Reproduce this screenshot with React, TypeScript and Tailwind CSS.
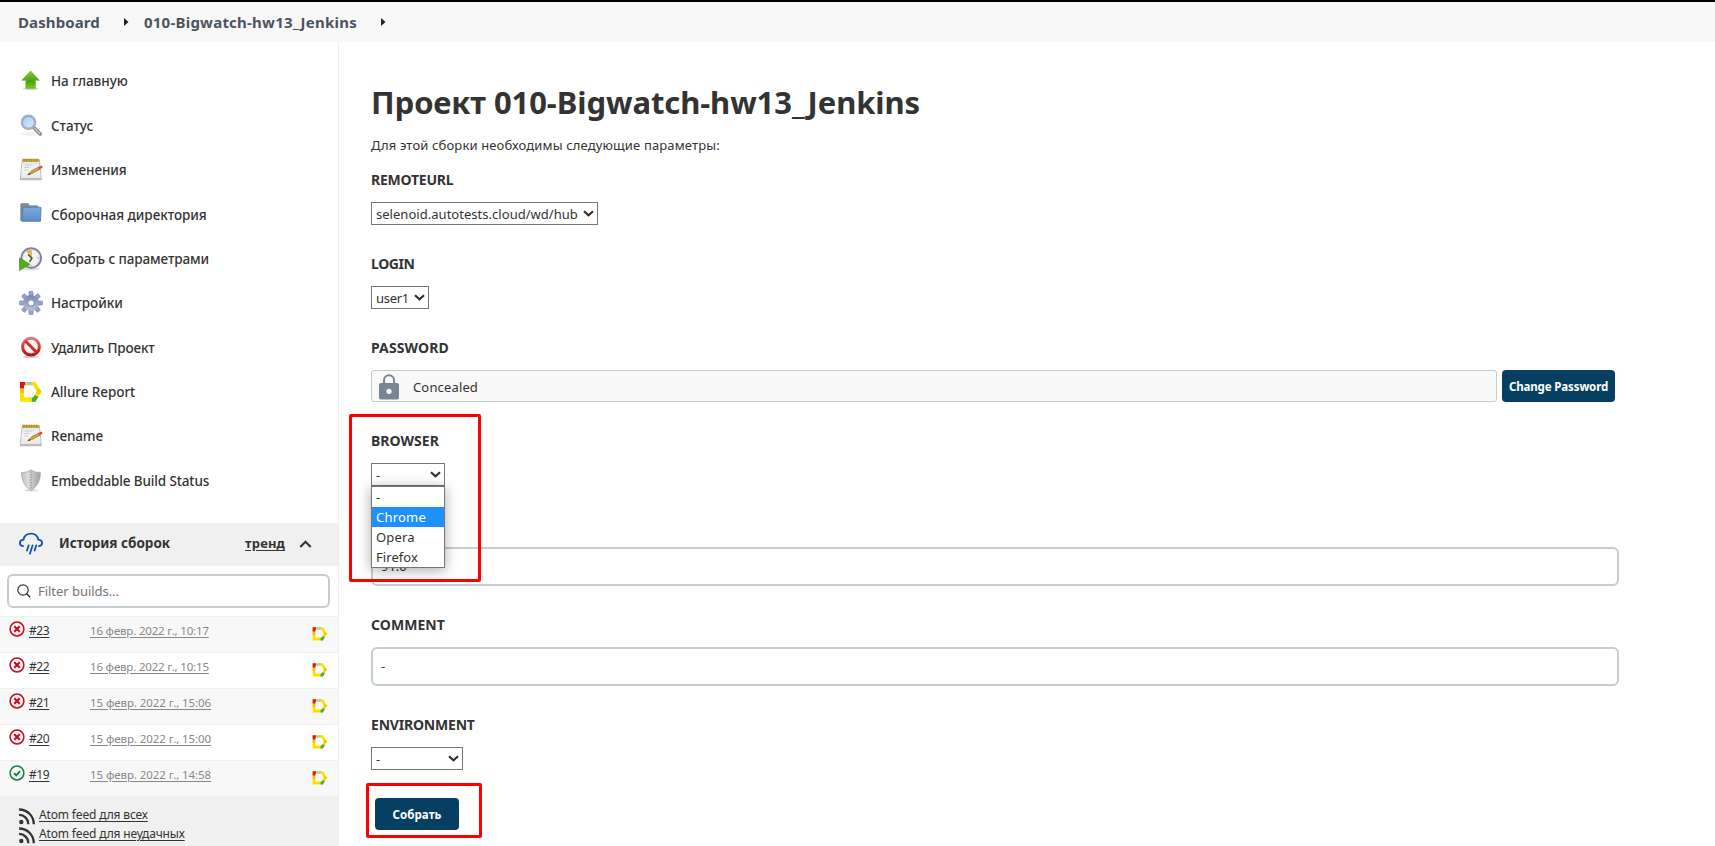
import type { ReactNode } from "react";

function UpIcon() {
  return (
    <svg width="24" height="24" viewBox="0 0 24 24">
      <defs>
        <linearGradient id="up" x1="0" y1="0" x2="0" y2="1">
          <stop offset="0" stopColor="#8cc63f" />
          <stop offset="0.6" stopColor="#4e9f12" />
          <stop offset="1" stopColor="#6fd40c" />
        </linearGradient>
      </defs>
      <ellipse cx="11.8" cy="19.8" rx="8" ry="1.5" fill="#d8d8d8" />
      <path d="M11.600 2 20.300 11.300h-4v8H6.900v-8H2.900z" fill="url(#up)" stroke="#6fae35" strokeWidth="0.7" strokeLinejoin="round" />
    </svg>
  );
}

function SearchIcon() {
  return (
    <svg width="24" height="24" viewBox="0 0 24 24">
      <defs>
        <linearGradient id="lens" x1="0" y1="0" x2="1" y2="1">
          <stop offset="0" stopColor="#a3c6ef" />
          <stop offset="1" stopColor="#e6f1fc" />
        </linearGradient>
      </defs>
      <ellipse cx="12" cy="20" rx="10" ry="1.800" fill="#efefef" />
      <path d="m15.200 14 6 6" stroke="#8b8b8b" strokeWidth="3.600" strokeLinecap="round" />
      <path d="m16 14.600 4.600 4.900" stroke="#c6c6c6" strokeWidth="1.500" strokeLinecap="round" />
      <circle cx="9.500" cy="8.300" r="7" fill="url(#lens)" stroke="#a9adb5" strokeWidth="1.600" />
      <circle cx="9.500" cy="8.300" r="5.800" fill="none" stroke="#7aa3df" strokeWidth="0.9" />
    </svg>
  );
}

function NotepadIcon() {
  return (
    <svg width="24" height="24" viewBox="0 0 24 24">
      <defs>
        <linearGradient id="pad" x1="0" y1="0" x2="0" y2="1">
          <stop offset="0" stopColor="#e2e2e0" />
          <stop offset="0.5" stopColor="#f6f6f5" />
          <stop offset="1" stopColor="#e4e4e2" />
        </linearGradient>
      </defs>
      <path d="M3.200 2h17.200l2 19.500H1.200z" fill="url(#pad)" stroke="#b3b3b1" strokeWidth="0.800" />
      <path d="M1.400 20h20.800l.3 2.200H1z" fill="#bcbcba" />
      <rect x="3.300" y="0.800" width="17" height="3" fill="#c0a83c" />
      <path d="M5 .8v3M7.500.8v3M10 .8v3M12.500.8v3M15 .8v3M17.500.8v3" stroke="#93801f" strokeWidth="0.700" />
      <path d="M5.500 7h8M5.300 9.500h5M5.100 12h4" stroke="#cdcdcd" strokeWidth="1" />
      <path d="m9.500 16.300 3.200-3.700 7.300-3.600 1 2.200-7.300 4z" fill="#dda048" stroke="#8c6127" strokeWidth="0.600" />
      <path d="m8.300 17.200 2-2.200 1.200 1.400z" fill="#3b2b18" />
      <path d="m19.500 9 3-1.600 1.200 2.200-3 1.700z" fill="#d9443c" />
    </svg>
  );
}

function FolderIcon() {
  return (
    <svg width="24" height="24" viewBox="0 0 24 24">
      <defs>
        <linearGradient id="folder" x1="0" y1="0" x2="0" y2="1">
          <stop offset="0" stopColor="#7fa9da" />
          <stop offset="1" stopColor="#5c8cc9" />
        </linearGradient>
      </defs>
      <path d="M1.700 2.500q0-.9.900-.9h6.300q.9 0 .9.900V3.700h8q1 0 1 1V18.500h-17.100z" fill="#868a89" stroke="#757978" strokeWidth="0.600" />
      <path d="M4 5.200h17.700l.3.400L21.500 19.300H2.800z" fill="url(#folder)" stroke="#4878b5" strokeWidth="0.800" />
    </svg>
  );
}

function ClockIcon() {
  return (
    <svg width="24" height="24" viewBox="0 0 24 24">
      <ellipse cx="12" cy="22" rx="9" ry="1.300" fill="#dedede" />
      <circle cx="12.200" cy="11" r="9.800" fill="#f2f2ec" stroke="#7f7ea3" strokeWidth="1.900" />
      <circle cx="12.200" cy="11" r="8.400" fill="none" stroke="#cfcfcf" strokeWidth="0.700" />
      <path d="M12.500 9.500 7.500 4.500q2.500-2 5-1z" fill="#e6c23d" stroke="#c9a745" strokeWidth="0.500" />
      <path d="m9 7.500 4 3.700-2.500 3.600" fill="none" stroke="#444444" strokeWidth="1.400" />
      <path d="M18.500 11h1.500M12.200 17.800V19" stroke="#999" strokeWidth="0.900" />
      <path d="m.500 11 10.500 6.200L.5 23.500z" fill="#4fae1c" stroke="#32810f" strokeWidth="0.600" />
    </svg>
  );
}

const teeth = [0, 45, 90, 135, 180, 225, 270, 315];

function GearIcon() {
  return (
    <svg width="24" height="24" viewBox="0 0 24 24">
      <defs>
        <linearGradient id="gear" x1="0" y1="0" x2="0" y2="1">
          <stop offset="0" stopColor="#7584b0" />
          <stop offset="1" stopColor="#bcc2da" />
        </linearGradient>
      </defs>
      <g fill="#97a1c5" stroke="#7682ab" strokeWidth="0.600">
        {teeth.map((a) => (
          <path key={a} d="M9.700 5.500 10.200.5h3.600l.5 5z" transform={`rotate(${a} 12 12)`} />
        ))}
      </g>
      <circle cx="12" cy="12" r="7.800" fill="url(#gear)" />
      <circle cx="12" cy="12" r="3.100" fill="#fff" stroke="#8590b5" strokeWidth="0.900" />
    </svg>
  );
}

function NoEntryIcon() {
  return (
    <svg width="24" height="24" viewBox="0 0 24 24">
      <defs>
        <linearGradient id="stop" x1="0" y1="0" x2="0" y2="1">
          <stop offset="0" stopColor="#e8787a" />
          <stop offset="0.500" stopColor="#d6383b" />
          <stop offset="1" stopColor="#c50d12" />
        </linearGradient>
      </defs>
      <ellipse cx="12" cy="20.800" rx="8" ry="1.200" fill="#cfcfcf" />
      <circle cx="12" cy="10.700" r="8.400" fill="#f8f5f5" stroke="url(#stop)" strokeWidth="3" />
      <path d="m6.300 5 11.400 11.400" stroke="#d4292d" strokeWidth="2.900" />
    </svg>
  );
}

function AllureIcon({ size }: { size: number }) {
  return (
    <svg width={size} height={size} viewBox="0 0 24 24">
      <path d="M1 2h15.500l5.900 9.500-6 10.200H1z M5 5.300v12h9.300l3.500-5.800-3.800-6.200z" fill="#ffe100" fillRule="evenodd" />
      <path d="M1 8h4v5H1z" fill="#e6c619" />
      <path d="m18 9 2.800 0 1.600 2.500-1.200 2.300-4.300-.6.900-1.700z" fill="#ecc81a" />
      <path d="M6 2h7.300v3.300H6z" fill="#a5d3a4" />
      <path d="m15.500 15.300 3.900 1.300-3 5.100h-3.600v-3.500l1.500-.9z" fill="#3fae49" />
      <path d="M1 2h5v3.300H5V8.200H1z" fill="#e3101e" />
    </svg>
  );
}

function ShieldIcon() {
  return (
    <svg width="24" height="24" viewBox="0 0 24 24">
      <defs>
        <linearGradient id="shield" x1="0" y1="0" x2="1" y2="0">
          <stop offset="0" stopColor="#bfc1be" />
          <stop offset="0.350" stopColor="#dcddda" />
          <stop offset="0.500" stopColor="#c9cbc7" />
          <stop offset="1" stopColor="#a0a29f" />
        </linearGradient>
      </defs>
      <ellipse cx="12" cy="21.300" rx="7" ry="1.300" fill="#ddd" />
      <path d="M12 1q4.500 2.900 9.500 2.500.2 12-9.500 18.200Q2.300 15.500 2.500 3.500 7.500 3.900 12 1z" fill="url(#shield)" stroke="#aaaca9" strokeWidth="0.800" />
      <path d="M12 2.500v18" stroke="#858784" strokeWidth="1" strokeDasharray="1.200 1.400" />
    </svg>
  );
}

function CloudIcon() {
  return (
    <svg width="24" height="24" viewBox="0 0 24 24" fill="none" stroke="#1052b8" strokeWidth="1.800" strokeLinecap="round">
      <path d="M4 14.200C2 13.700.9 12.500.9 10.900c0-1.700 1.400-3 3.600-3.200C5.200 4 8.200 1.700 12 1.700c3.700 0 6.600 2.300 7.300 6 2.400.2 3.800 1.500 3.800 3.300 0 1.600-1.100 2.800-3.100 3.200" />
      <path d="M9.700 13.300 8 18.500M13.600 13.300 10.900 21.700M17.300 13.300 15.600 18.500" />
    </svg>
  );
}

function BuildStatus({ ok }: { ok: boolean }) {
  return (
    <svg width="16" height="16" viewBox="0 0 16 16" fill="none" stroke={ok ? "#138347" : "#cc0a1c"}>
      <circle cx="8" cy="8" r="6.900" strokeWidth="1.500" />
      {ok ? <path d="m5 8.300 2.200 2 3.900-4.200" strokeWidth="1.900" /> : <path d="m5.300 5.300 5.400 5.400m0-5.400-5.400 5.400" strokeWidth="2.200" />}
    </svg>
  );
}

function FeedIcon() {
  return (
    <svg width="17" height="17" viewBox="0 0 17 17" fill="none" stroke="#333" strokeWidth="2.300">
      <circle cx="2.300" cy="14" r="2.200" fill="#333" stroke="none" />
      <path d="M.1 6.900c5.200 0 9.300 4.200 9.300 9.300M.1 1.500c8.200 0 14.700 6.600 14.700 14.700" />
    </svg>
  );
}

function Crumb() {
  return (
    <svg width="5" height="8" viewBox="0 0 5 8">
      <path d="M0 0 4.500 4 0 8z" fill="#222" />
    </svg>
  );
}

const menu: { icon: ReactNode; label: string; track: string }[] = [
  { icon: <UpIcon />, label: "На главную", track: "tracking-[-0.020px]" },
  { icon: <SearchIcon />, label: "Статус", track: "tracking-[-0.050px]" },
  { icon: <NotepadIcon />, label: "Изменения", track: "tracking-[-0.060px]" },
  { icon: <FolderIcon />, label: "Сборочная директория", track: "tracking-[-0.040px]" },
  { icon: <ClockIcon />, label: "Собрать с параметрами", track: "tracking-[-0.110px]" },
  { icon: <GearIcon />, label: "Настройки", track: "tracking-[-0.050px]" },
  { icon: <NoEntryIcon />, label: "Удалить Проект", track: "tracking-[-0.110px]" },
  { icon: <AllureIcon size={24} />, label: "Allure Report", track: "tracking-[-0.070px]" },
  { icon: <NotepadIcon />, label: "Rename", track: "tracking-[-0.150px]" },
  { icon: <ShieldIcon />, label: "Embeddable Build Status", track: "tracking-[-0.130px]" },
];

const builds = [
  { id: "#23", date: "16 февр. 2022 г., 10:17", ok: false, track: "tracking-[-0.180px]" },
  { id: "#22", date: "16 февр. 2022 г., 10:15", ok: false, track: "tracking-[-0.180px]" },
  { id: "#21", date: "15 февр. 2022 г., 15:06", ok: false, track: "tracking-[-0.080px]" },
  { id: "#20", date: "15 февр. 2022 г., 15:00", ok: false, track: "tracking-[-0.080px]" },
  { id: "#19", date: "15 февр. 2022 г., 14:58", ok: true, track: "tracking-[-0.080px]" },
];

function Sidebar() {
  return (
    <aside className="flex w-[339px] shrink-0 flex-col border-r border-[#eeeeee] pt-[17px]">
      <nav>
        {menu.map((m) => (
          <a key={m.label} className="flex h-[44.400px] items-center gap-2 pl-[19px]">
            {m.icon}
            <span className={`pt-[0.600px] text-[13.500px] font-medium ${m.track}`}>{m.label}</span>
          </a>
        ))}
      </nav>
      <div className="mt-5 flex h-[43px] items-center bg-[#f0f0f0] pl-[19px]">
        <CloudIcon />
        <span className="ml-4 -mt-[3px] text-[13.500px] font-bold tracking-[-0.020px]">История сборок</span>
        <a className="-mt-[2px] ml-auto text-[13px] font-bold tracking-[0.150px] underline underline-offset-2">тренд</a>
        <svg className="mr-[26px] ml-[14px]" width="13" height="8" viewBox="0 0 13 8" fill="none" stroke="#333" strokeWidth="2">
          <path d="m1.300 7 5.200-5.300L11.700 7" />
        </svg>
      </div>
      <div className="mt-2 mr-2 ml-[7px] flex h-[34px] items-center rounded-md border-2 border-[#c3cdd2] pr-2 pl-2">
        <svg width="14" height="14" viewBox="0 0 14 14" fill="none" stroke="#333" strokeWidth="1.200">
          <circle cx="6" cy="6" r="5.200" />
          <path d="m9.700 9.700 3.500 3.500" strokeWidth="1.500" />
        </svg>
        <span className="ml-[7px] pt-[2px] text-[13px] tracking-[-0.040px] text-[#757575]">Filter builds...</span>
      </div>
      <div className="mt-2">
        {builds.map((b) => (
          <div key={b.id} className="flex h-9 border-t border-[#efefef] odd:bg-[#f8f8f8]">
            <div className="flex w-[90px] pt-1 pl-[9px]">
              <BuildStatus ok={b.ok} />
              <a className="ml-1 pt-[2px] text-[12px] leading-4 tracking-[-0.400px] underline underline-offset-2">{b.id}</a>
            </div>
            <a className={`pt-[6px] text-[11.500px] leading-4 text-[#888888] underline underline-offset-2 ${b.track}`}>{b.date}</a>
            <div className="mr-[10px] ml-auto pt-[9px]">
              <AllureIcon size={16} />
            </div>
          </div>
        ))}
      </div>
      <div className="flex grow flex-col bg-[#f0f0f0] pt-[9px] pl-[19px] text-[12px] leading-[19px] tracking-[-0.150px]">
        <a className="flex h-[19px] items-center gap-[3px] underline underline-offset-2">
          <span className="mt-[4px]"><FeedIcon /></span>
          Atom feed для всех
        </a>
        <a className="flex h-[19px] items-center gap-[3px] underline underline-offset-2">
          <span className="mt-[4px]"><FeedIcon /></span>
          Atom feed для неудачных
        </a>
      </div>
    </aside>
  );
}

function Label({ children, track }: { children: ReactNode; track: string }) {
  return <div className={`mb-3 h-5 text-[14px] leading-5 font-bold ${track}`}>{children}</div>;
}

function Select({ width, value, track = "" }: { width: string; value: string; track?: string }) {
  return (
    <div className={`flex h-[23px] items-center justify-between border border-[#767676] bg-white pr-[3px] pl-[4px] ${width}`}>
      <span className={`pt-[2px] text-[13px] whitespace-nowrap ${track}`}>{value}</span>
      <svg className="-mt-[1px]" width="11" height="7" viewBox="0 0 11 7" fill="none" stroke="#2b2b2b" strokeWidth="2">
        <path d="m1 1.200 4.500 4.100L10 1.200" />
      </svg>
    </div>
  );
}

function TextBox({ children }: { children: ReactNode }) {
  return <div className="flex h-[39px] w-[1248px] items-center rounded-md border-2 border-[#c3cdd2] bg-white px-2 pt-px text-[13px]">{children}</div>;
}

export default function App() {
  return (
    <div className="flex h-[846px] w-[1715px] flex-col overflow-hidden border-t-2 border-black bg-white font-['Noto_Sans','Open_Sans',sans-serif] text-[#333333]">
      <header className="flex h-10 shrink-0 items-center bg-[#f8f8f8] pl-[18px] text-[15px] font-bold text-[#4d545d]">
        <span className="w-[106px] tracking-[0.110px]">Dashboard</span>
        <Crumb />
        <span className="ml-[15px] w-[237px] tracking-[0.230px]">010-Bigwatch-hw13_Jenkins</span>
        <Crumb />
      </header>
      <div className="flex min-h-0 grow">
        <Sidebar />
        <main className="flex grow flex-col pt-10 pl-8">
          <h1 className="h-10 text-[31px] leading-10 font-bold tracking-[-0.080px]">Проект 010-Bigwatch-hw13_Jenkins</h1>
          <p className="mt-[13px] mb-[15px] h-5 text-[13px] leading-5 tracking-[0.140px]">Для этой сборки необходимы следующие параметры:</p>
          <div className="flex flex-col gap-[29px]">
            <div>
              <Label track="tracking-[-0.220px]">REMOTEURL</Label>
              <Select width="w-[227px]" value="selenoid.autotests.cloud/wd/hub" track="tracking-[0.030px]" />
            </div>
            <div>
              <Label track="tracking-[-0.400px]">LOGIN</Label>
              <Select width="w-[58px]" value="user1" track="tracking-[-0.280px]" />
            </div>
            <div>
              <Label track="tracking-[0.120px]">PASSWORD</Label>
              <div className="flex gap-[5px]">
                <div className="flex h-8 w-[1126px] items-center rounded-[3px] border border-[#c3cdd2] bg-[#f9f9f9] pl-[7px]">
                  <svg className="mt-px" width="20" height="26" viewBox="0 0 20 26">
                    <path d="M5 10V6.200a5 5 0 0 1 10 0V10" fill="none" stroke="#788596" strokeWidth="2" />
                    <path d="M2 9h16q2 0 2 2v12.500q0 2-2 2H2q-2 0-2-2V11q0-2 2-2z" fill="#788596" />
                    <circle cx="10" cy="17.300" r="2.600" fill="#fff" />
                  </svg>
                  <span className="ml-[14px] pt-[3px] text-[13px] tracking-[0.150px]">Concealed</span>
                </div>
                <button className="h-8 w-[113px] rounded-[4px] bg-[#073f62] pt-[2px] text-[11.500px] font-bold tracking-[-0.130px] whitespace-nowrap text-white">Change Password</button>
              </div>
            </div>
            <div>
              <Label track="tracking-[0.020px]">BROWSER</Label>
              <div className="relative w-[74px]">
                <Select width="w-[74px]" value="-" />
                <ul className="absolute top-[23px] left-0 z-10 h-[82px] w-[74px] border border-[#767676] bg-white text-[13px] leading-5 shadow-[0_2px_12px_rgba(0,0,0,0.350)]">
                  <li className="h-5 pl-[4px]">-</li>
                  <li className="h-5 bg-[#1e90ff] pl-[4px] tracking-[0.210px] text-white">Chrome</li>
                  <li className="h-5 pl-[4px] tracking-[0.150px]">Opera</li>
                  <li className="h-5 pl-[4px] tracking-[0.070px]">Firefox</li>
                </ul>
                <div className="absolute -top-[49px] -left-[22px] z-20 h-[168px] w-[132px] rounded-[2px] border-[3px] border-[#ff0000]" />
              </div>
            </div>
            <div className="pt-8">
              <TextBox>91.0</TextBox>
            </div>
            <div>
              <Label track="tracking-[0.060px]">COMMENT</Label>
              <TextBox>-</TextBox>
            </div>
            <div>
              <Label track="tracking-[-0.200px]">ENVIRONMENT</Label>
              <Select width="w-[92px]" value="-" />
            </div>
          </div>
          <div className="relative mt-7 ml-1 w-[84px]">
            <button className="block h-8 w-[84px] rounded-[4px] bg-[#073f62] pt-[2px] text-[11.500px] font-bold tracking-[0.080px] text-white">Собрать</button>
            <div className="absolute -top-[15px] -left-[9px] h-[55px] w-[116px] rounded-[2px] border-[3px] border-[#ff0000]" />
          </div>
        </main>
      </div>
    </div>
  );
}
